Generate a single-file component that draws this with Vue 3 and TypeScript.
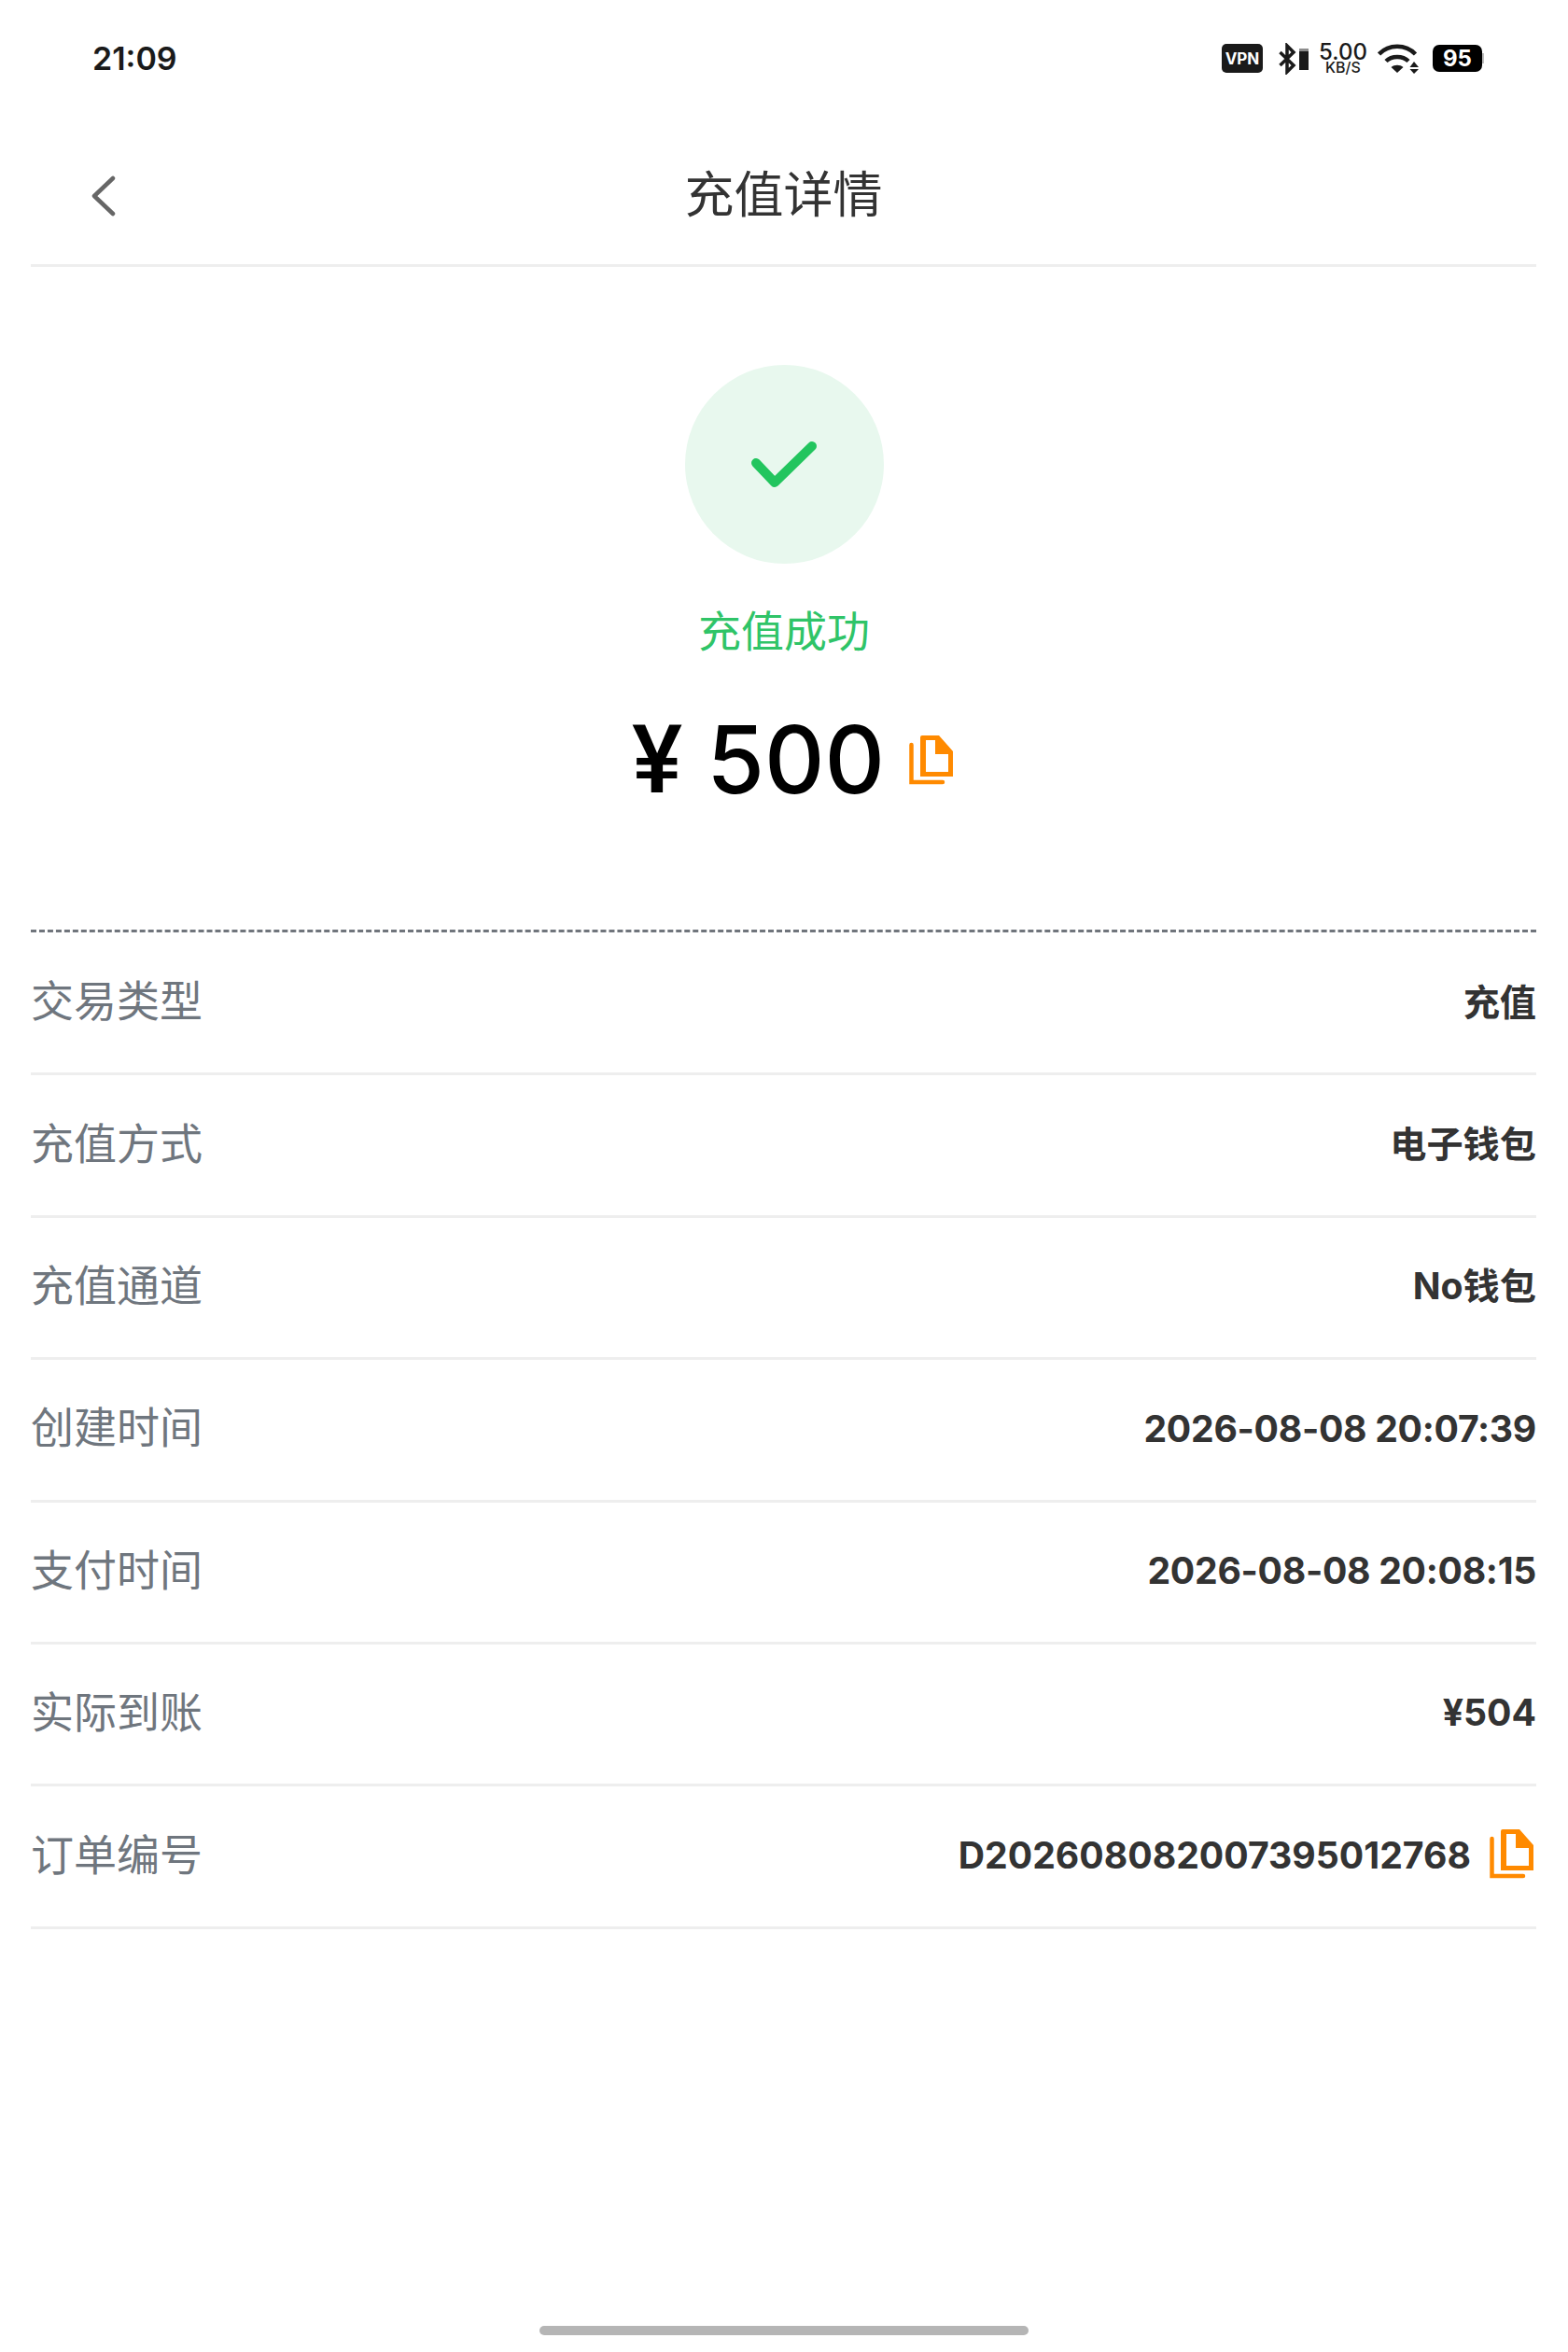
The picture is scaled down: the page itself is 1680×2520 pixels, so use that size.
<template>
  <div class="page">
    <div class="status-bar">
      <span class="clock">21:09</span>
      <div class="status-icons">
        <span class="vpn">VPN</span>
        <svg class="bt" width="32" height="34" viewBox="0 0 32 34">
          <path d="M1.500 10 L16 24 L9 31 V3 L16 10 L1.500 24" fill="none" stroke="#1a1a1a" stroke-width="3.500" />
          <rect x="22" y="6" width="10" height="3" fill="#8c8c8c" />
          <rect x="22" y="9" width="10" height="20" fill="#1a1a1a" />
        </svg>
        <div class="speed">
          <span class="speed-num">5.00</span>
          <span class="speed-unit">KB/S</span>
        </div>
        <svg class="wifi" width="44" height="32" viewBox="0 0 44 32">
          <path d="M1.500 11 C12 0 30 0 40.500 11" fill="none" stroke="#1a1a1a" stroke-width="4.500" />
          <path d="M9 18.500 C15 12.500 27 12.500 33 18.500" fill="none" stroke="#1a1a1a" stroke-width="4.500" />
          <path d="M21 31 L14.500 25 C18 22 24 22 27.500 25 Z" fill="#1a1a1a" />
          <path d="M39 19 L44 25 H34.500 Z M39 32 L44 27 H34.500 Z" fill="#1a1a1a" />
        </svg>
        <div class="battery"><span>95</span></div>
      </div>
    </div>

    <div class="nav">
      <svg class="back" width="28" height="44" viewBox="0 0 28 44">
        <path d="M24 3 L4 22 L24 41" fill="none" stroke="#666" stroke-width="4.500" stroke-linecap="round" stroke-linejoin="round" />
      </svg>
      <span class="nav-title">充值详情</span>
    </div>

    <div class="hero">
      <div class="check-circle">
        <svg width="70" height="50" viewBox="0 0 70 50">
          <path d="M5 23 L25 44 L65 5" fill="none" stroke="#22c55e" stroke-width="10" stroke-linecap="round" stroke-linejoin="round" />
        </svg>
      </div>
      <div class="result">充值成功</div>
      <div class="amount">
        <span class="yen">¥</span>
        <span class="amount-num">500</span>
        <svg class="copy-big" width="48" height="54" viewBox="0 0 48 54">
          <path fill="#ff8a00" d="M14 0 H32 L47 17 V44 H12 V2 Q12 0 14 0 Z M18 5 V39 H42 V20 H28 V5 Z" fill-rule="evenodd" />
          <path d="M2.500 10 V50 H36" fill="none" stroke="#ff8a00" stroke-width="4.500" stroke-linecap="round" />
        </svg>
      </div>
    </div>

    <div class="rows">
      <div v-for="row in rows" :key="row.label" class="row">
        <span class="label">{{ row.label }}</span>
        <div class="value">
          <span :class="{ 'value-cjk': row.cjk, 'value-date': row.date }">{{ row.value }}</span>
          <svg v-if="row.copy" class="copy-small" width="48" height="54" viewBox="0 0 48 54">
            <path fill="#ff8a00" d="M14 0 H32 L47 17 V44 H12 V2 Q12 0 14 0 Z M18 5 V39 H42 V20 H28 V5 Z" fill-rule="evenodd" />
            <path d="M2.500 10 V50 H36" fill="none" stroke="#ff8a00" stroke-width="4.500" stroke-linecap="round" />
          </svg>
        </div>
      </div>
    </div>

    <div class="home-bar"></div>
  </div>
</template>

<script setup lang="ts">
interface Row {
  label: string
  value: string
  cjk?: boolean
  date?: boolean
  copy?: boolean
}

const rows: Row[] = [
  { label: '交易类型', value: '充值', cjk: true },
  { label: '充值方式', value: '电子钱包', cjk: true },
  { label: '充值通道', value: 'No钱包', cjk: true },
  { label: '创建时间', value: '2026-08-08 20:07:39', date: true },
  { label: '支付时间', value: '2026-08-08 20:08:15', date: true },
  { label: '实际到账', value: '¥504' },
  { label: '订单编号', value: 'D202608082007395012768', copy: true },
]
</script>

<style scoped>
.page {
  position: relative;
  width: 1680px;
  height: 2520px;
  background: #fff;
  font-family: Inter, "Noto Sans CJK SC", sans-serif;
  overflow: hidden;
}

.status-bar {
  height: 125px;
  padding: 0 90px 0 99px;
  display: flex;
  align-items: center;
  justify-content: space-between;
  box-sizing: border-box;
}

.clock {
  font-size: 34px;
  font-weight: 600;
  color: #1a1a1a;
}

.status-icons {
  display: flex;
  align-items: center;
  gap: 12px;
}

.vpn {
  width: 44px;
  height: 31px;
  margin-right: 5px;
  border-radius: 5px;
  background: #1a1a1a;
  color: #fff;
  font-size: 17px;
  font-weight: 700;
  display: flex;
  align-items: center;
  justify-content: center;
}

.speed {
  display: flex;
  flex-direction: column;
  align-items: center;
  width: 50px;
  color: #1a1a1a;
}

.speed-num {
  font-size: 24px;
  font-weight: 500;
  line-height: 20px;
}

.speed-unit {
  font-size: 16px;
  font-weight: 500;
  line-height: 13px;
}

.wifi {
  margin-right: 3px;
}

.battery {
  position: relative;
  width: 53px;
  height: 29px;
  margin-right: 2px;
  border-radius: 7px;
  background: #000;
  color: #fff;
  font-size: 24px;
  font-weight: 700;
  display: flex;
  align-items: center;
  justify-content: center;
}

.battery::after {
  content: "";
  position: absolute;
  right: -2px;
  top: 9px;
  width: 2px;
  height: 11px;
  background: #bdbdbd;
}

.nav {
  position: relative;
  height: 158px;
  margin: 0 34px 0 33px;
  border-bottom: 3px solid #eeeeee;
  display: flex;
  align-items: center;
  justify-content: center;
}

.back {
  position: absolute;
  left: 64px;
  top: 63px;
}

.nav-title {
  font-size: 53px;
  color: #333;
  padding-top: 2px;
}

.hero {
  display: flex;
  flex-direction: column;
  align-items: center;
  padding-top: 105px;
}

.check-circle {
  width: 213px;
  height: 213px;
  border-radius: 50%;
  background: #e8f8ee;
  display: flex;
  align-items: center;
  justify-content: center;
}

.result {
  margin-top: 38px;
  font-size: 46px;
  line-height: 68px;
  color: #2fc468;
}

.amount {
  margin-top: 44px;
  margin-left: 19px;
  display: flex;
  align-items: center;
  gap: 26px;
  font-size: 100px;
  font-weight: 450;
  line-height: 120px;
  color: #000;
}

.yen {
  font-family: Roboto, sans-serif;
  font-size: 102px;
  font-weight: 500;
}

.copy-big {
  margin-top: 2px;
}

.rows {
  margin: 122px 34px 0 33px;
  padding-top: 1px;
  border-top: 3px dashed #70757c;
}

.row {
  height: 152.400px;
  box-sizing: border-box;
  padding-bottom: 4px;
  border-bottom: 3px solid #eeeeee;
  display: flex;
  align-items: center;
  justify-content: space-between;
}

.label {
  padding-bottom: 7px;
  font-size: 46px;
  color: #6f767e;
}

.value {
  display: flex;
  align-items: center;
  gap: 20px;
  font-size: 39.200px;
  font-weight: 700;
  color: #333;
}

.value-cjk {
  padding-bottom: 4px;
}

.value-date {
  padding-top: 1px;
  letter-spacing: -0.300px;
}

.copy-small {
  margin-right: 2px;
}

.home-bar {
  position: absolute;
  left: 578px;
  top: 2492px;
  width: 524px;
  height: 10px;
  border-radius: 5px;
  background: #b5b5b5;
}
</style>
